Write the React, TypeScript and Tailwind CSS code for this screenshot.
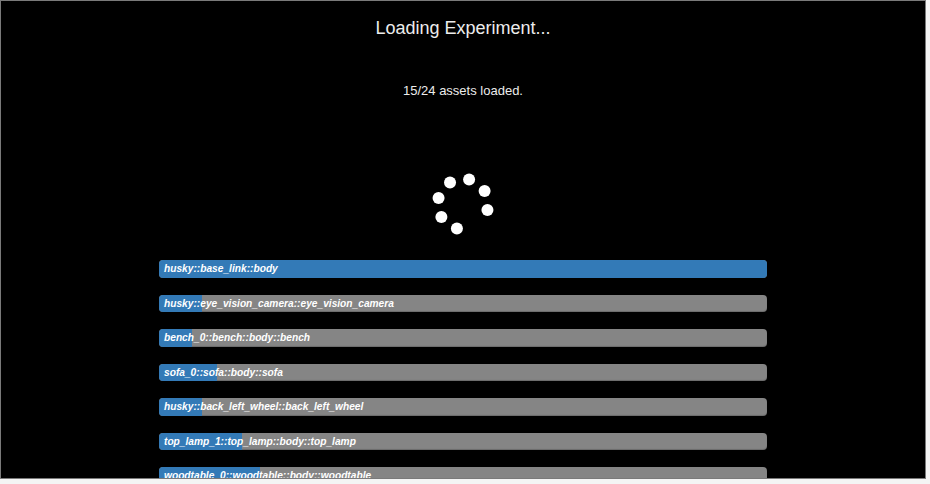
const assets = [
  { name: "husky::base_link::body", fill: 608 },
  { name: "husky::eye_vision_camera::eye_vision_camera", fill: 43 },
  { name: "bench_0::bench::body::bench", fill: 33 },
  { name: "sofa_0::sofa::body::sofa", fill: 58 },
  { name: "husky::back_left_wheel::back_left_wheel", fill: 43 },
  { name: "top_lamp_1::top_lamp::body::top_lamp", fill: 83 },
  { name: "woodtable_0::woodtable::body::woodtable", fill: 101 },
];

// 8 slots round the ring, one left empty
const dots = [0, 1, 2, 3, 5, 6, 7].map((k) => {
  const a = ((-121 + 45 * k) * Math.PI) / 180;
  return { cx: 32 + 25.2 * Math.cos(a), cy: 32 + 25.2 * Math.sin(a) };
});

const Spinner = () => (
  <svg width="64" height="64" viewBox="0 0 64 64" className="mt-[71px] ml-[0.5px] shrink-0">
    {dots.map((d, i) => (
      <circle key={i} cx={d.cx} cy={d.cy} r="6" fill="#fff" />
    ))}
  </svg>
);

const AssetBar = ({ name, fill }: { name: string; fill: number }) => (
  <div className="w-[608px] h-[17.5px] mb-[17px] shrink-0 rounded-[4px] bg-[#858585] overflow-hidden shadow-[inset_0_-1px_1px_rgba(0,0,0,0.2)]">
    <div
      className="h-full bg-[#337ab7] pl-[5px] whitespace-nowrap overflow-visible text-[10.2px] leading-[17.5px] font-bold italic text-white"
      style={{ width: fill }}
    >
      {name}
    </div>
  </div>
);

export default function App() {
  return (
    <div className="w-[930px] h-[484px] bg-[#f4f4f4] font-['Liberation_Sans',Arial,sans-serif]">
      <div className="w-[926px] h-[479px] bg-black border border-[#7a7a7a] overflow-hidden flex flex-col items-center">
        <h1 className="mt-[15px] shrink-0 text-[18px] leading-[24px] text-[#ececec]">Loading Experiment...</h1>
        <p className="mt-[41px] shrink-0 text-[13px] leading-[20px] text-[#ececec]">15/24 assets loaded.</p>
        <Spinner />
        <div className="mt-[24px] shrink-0 flex flex-col items-center">
          {assets.map((a) => (
            <AssetBar key={a.name} name={a.name} fill={a.fill} />
          ))}
        </div>
      </div>
    </div>
  );
}
